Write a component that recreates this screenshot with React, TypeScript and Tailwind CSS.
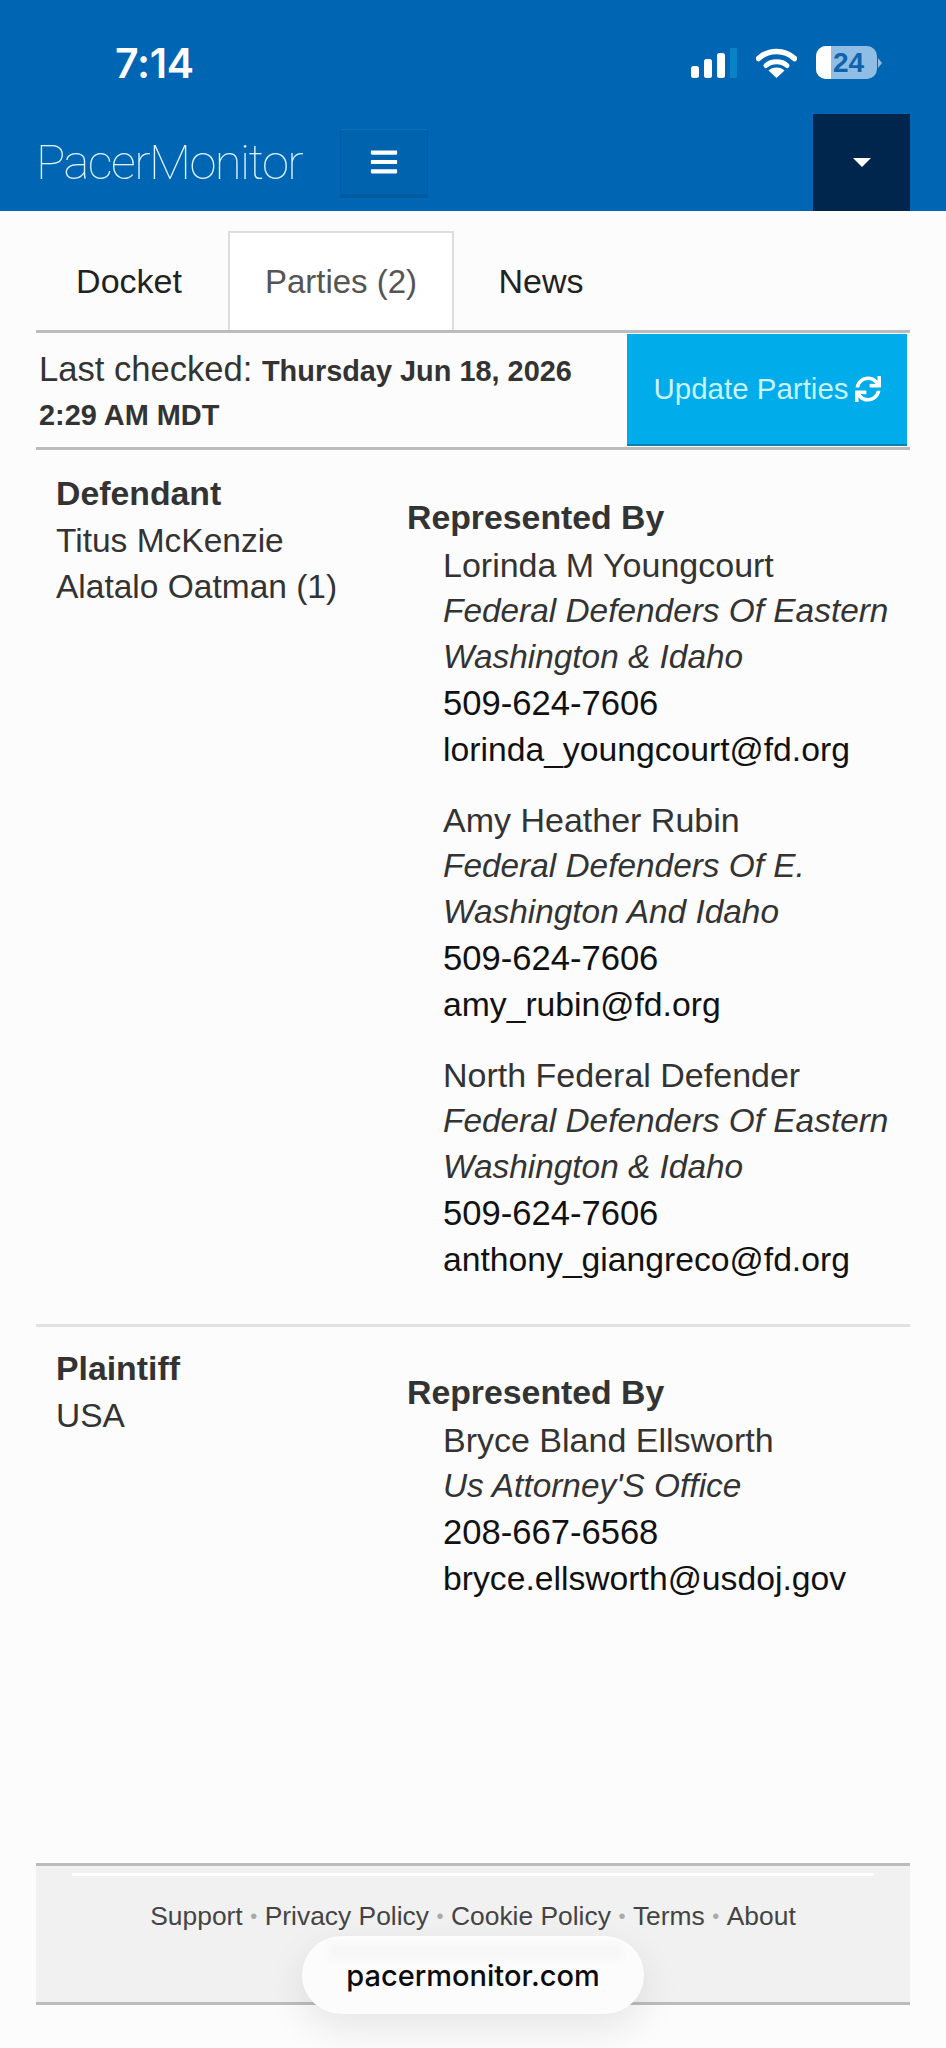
import { FaBars, FaSync } from 'react-icons/fa';

const sans = 'font-["Liberation_Sans",Arial,sans-serif]';

function SignalIcon() {
  return (
    <svg width="46" height="30" viewBox="0 0 46 30" className="block">
      <rect x="0" y="18" width="8" height="12" rx="2.5" fill="#fff" />
      <rect x="13" y="11" width="8" height="19" rx="2.5" fill="#fff" />
      <rect x="26" y="5" width="8" height="25" rx="2.5" fill="#fff" />
      <rect x="39" y="0" width="7" height="30" rx="1" fill="#0a82c6" />
    </svg>
  );
}

function WifiIcon() {
  return (
    <svg width="41" height="30" viewBox="0 0 41 30" className="block">
      <path d="M2.5 10.5 C12.5 1 28.5 1 38.5 10.5" fill="none" stroke="#fff" strokeWidth="5.5" strokeLinecap="round" />
      <path d="M10 17.5 C15.5 12.5 25.5 12.5 31 17.5" fill="none" stroke="#fff" strokeWidth="5" strokeLinecap="round" />
      <path d="M20.5 30 L12.5 22.5 C16.5 18.5 24.5 18.5 28.5 22.5 Z" fill="#fff" />
    </svg>
  );
}

function BatteryIcon() {
  return (
    <div className="flex items-center">
      <div className="relative w-[61px] h-[33px] rounded-[10px] overflow-hidden bg-[#8fbde3]">
        <div className="absolute left-0 top-0 bottom-0 w-[15px] bg-white" />
        <span className={`absolute inset-0 flex items-center justify-center pl-[4px] ${sans} text-[28px] font-bold text-[#0f63ad]`}>24</span>
      </div>
      <div className="w-0 h-0 border-y-[5px] border-y-transparent border-l-[4px] border-l-[#8fbde3] ml-[1px]" />
    </div>
  );
}

function Attorney({ name, firm, phone, email }: { name: string; firm: string[]; phone: string; email: string }) {
  return (
    <div className="pl-[36px] mb-[25px] text-[#111]">
      <div className="text-[#333]">{name}</div>
      {firm.map((line) => (
        <div key={line} className="italic text-[#333] text-[33.4px]">{line}</div>
      ))}
      <div className="text-[34.6px]">{phone}</div>
      <div className="text-[33.7px]">{email}</div>
    </div>
  );
}

function PartyRow({ role, names, children }: { role: string; names: string[]; children: React.ReactNode }) {
  return (
    <div className="flex pl-[20px]">
      <div className="w-[351px] pt-[18px]">
        <div className="font-bold text-[#333] mb-[2px] text-[33.8px]">{role}</div>
        {names.map((n) => (
          <div key={n} className="text-[#333] text-[33.5px]">{n}</div>
        ))}
      </div>
      <div className="flex-1 pt-[42px]">
        <div className="font-bold text-[#333] mb-[2px] text-[33.8px]">Represented By</div>
        {children}
      </div>
    </div>
  );
}

export default function App() {
  return (
    <div className={`relative w-[946px] h-[2048px] overflow-hidden bg-[#fcfcfc] ${sans} flex flex-col`}>
      <header className="h-[211px] bg-[#0066b3] shrink-0 flex flex-col">
        <div className="h-[114px] relative flex items-start justify-between pl-[115px] pr-[64px] pt-[44px]">
          <span className="text-[41px] leading-[38px] text-white tracking-[-0.3px] font-['Inter',sans-serif] font-semibold">7:14</span>
          <div className="flex items-center gap-[19px] pt-[2px]">
            <SignalIcon />
            <WifiIcon />
            <BatteryIcon />
          </div>
        </div>
        <div className="flex-1 flex items-start pl-[36px] pr-[36px]">
          <span className="text-[49px] leading-[66px] mt-[16px] font-['Roboto',sans-serif] font-thin text-[#dff5ff] tracking-[-1.6px] w-[304px]">PacerMonitor</span>
          <button className="w-[88px] h-[66px] mt-[15px] bg-[#0063ae] border border-[#005ca6] border-t-[#0b72bb] shadow-[0_3px_0_#005a9f] flex items-center justify-center text-white">
            <FaBars className="w-[30px] h-[30px]" />
          </button>
          <div className="ml-auto w-[97px] h-[97px] bg-[#00264d] flex items-center justify-center">
            <div className="w-0 h-0 border-x-[9px] border-x-transparent border-t-[9px] border-t-white" />
          </div>
        </div>
      </header>

      <main className="flex-1 flex flex-col mx-[36px] text-[34px] leading-[46px]">
        <nav className="mt-[20px] flex h-[99px] shrink-0">
          <div className="w-[192px] flex items-center justify-center pr-[6px] text-[#222]">Docket</div>
          <div className="w-[226px] bg-white border-x-2 border-t-2 border-[#ddd] flex items-center justify-center text-[#555] text-[33px]">Parties (2)</div>
          <div className="w-[174px] flex items-center justify-center text-[#222]">News</div>
        </nav>
        <div className="h-[120px] shrink-0 border-y-[3px] border-[#bcbcbc] flex items-stretch">
          <div className="flex-1 pl-[3px] pt-[14px] text-[#333] leading-[44px] text-[34.6px]">
            <div>
              Last checked: <span className="text-[28.9px] font-bold">Thursday Jun 18, 2026</span>
            </div>
            <div className="text-[28.9px] font-bold">2:29 AM MDT</div>
          </div>
          <button className="w-[280px] mr-[3px] mt-[1px] mb-[1px] bg-[#00ace9] border-b-2 border-b-[#0a7fb5] text-[#c9f3ff] text-[29.5px] flex items-center justify-center gap-[6px]">
            Update Parties <FaSync className="w-[26px] h-[26px] text-white" />
          </button>
        </div>

        <div className="mt-[2px]">
          <PartyRow role="Defendant" names={['Titus McKenzie', 'Alatalo Oatman (1)']}>
            <Attorney name="Lorinda M Youngcourt" firm={['Federal Defenders Of Eastern', 'Washington & Idaho']} phone="509-624-7606" email="lorinda_youngcourt@fd.org" />
            <Attorney name="Amy Heather Rubin" firm={['Federal Defenders Of E.', 'Washington And Idaho']} phone="509-624-7606" email="amy_rubin@fd.org" />
            <Attorney name="North Federal Defender" firm={['Federal Defenders Of Eastern', 'Washington & Idaho']} phone="509-624-7606" email="anthony_giangreco@fd.org" />
          </PartyRow>
        </div>
        <div className="h-[3px] bg-[#e2e2e2] mt-[17px] shrink-0" />
        <PartyRow role="Plaintiff" names={['USA']}>
          <Attorney name="Bryce Bland Ellsworth" firm={["Us Attorney'S Office"]} phone="208-667-6568" email="bryce.ellsworth@usdoj.gov" />
        </PartyRow>

        <footer className="mt-auto mb-[43px] h-[142px] shrink-0 bg-[#f1f1f1] border-y-[3px] border-[#bcbcbc] px-[36px] pt-[7px] text-[26.4px] leading-[36px] text-[#444]">
          <div className="h-[3px] bg-white" />
          <div className="mt-[22px] flex justify-center items-center gap-[7.5px] text-[#444]">
            <span>Support</span><span className="text-[#aaa] text-[20px]">•</span>
            <span>Privacy Policy</span><span className="text-[#aaa] text-[20px]">•</span>
            <span>Cookie Policy</span><span className="text-[#aaa] text-[20px]">•</span>
            <span>Terms</span><span className="text-[#aaa] text-[20px]">•</span>
            <span>About</span>
          </div>
        </footer>
      </main>

      <div className="absolute left-[302px] top-[1936px] w-[342px] h-[78px] rounded-[39px] bg-[#fcfcfc] shadow-[0_14px_40px_rgba(0,0,0,0.09)] flex items-center justify-center text-[29px] text-[#0c0c0c] font-['Inter',sans-serif] font-medium pt-[1px]">
        <div className="absolute left-[26px] right-[21px] top-[7px] h-[17px] bg-[#f7f7f7] blur-[3px]" />
        <span className="relative">pacermonitor.com</span>
      </div>
    </div>
  );
}
